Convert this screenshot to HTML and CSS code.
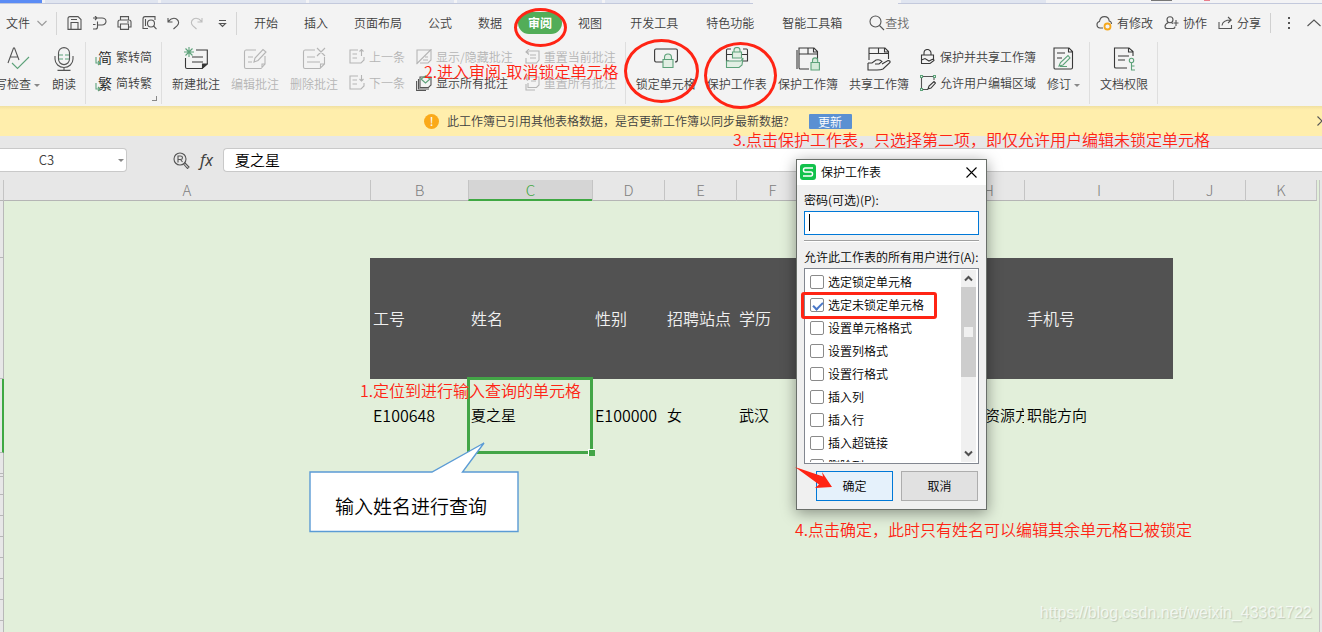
FILE: index.html
```html
<!DOCTYPE html>
<html lang="zh-CN">
<head>
<meta charset="utf-8">
<title>保护工作表</title>
<link rel="stylesheet" href="styles.css">
</head>
<body>
<div class="page">
  <div class="tabstrip">
    <span class="tab home"></span><span class="tab short"></span><span class="tab"></span><span class="tab"></span><span class="tab"></span><span class="tab"></span><span class="tab active"></span><span class="tab"></span>
    <span class="winicons"><i class="w1"></i><i class="w2"></i></span>
  </div>

  <header class="menubar">
    <button class="file">文件<svg class="ico soft" width="10" height="14" viewBox="0 0 10 14"><path d="M.5 5 5 9.500 9.500 5"/></svg></button>
    <div class="quick">
      <button aria-label="保存"><svg class="ico" width="15" height="14" viewBox="0 0 15 14"><path d="M1 2.500Q1 .6 3 .6H11L14 3.500V13.400H1ZM4 13V6.500H11V13M4 3.500H10"/></svg></button>
      <button aria-label="导出"><svg class="ico" width="15" height="14" viewBox="0 0 15 14"><path d="M1 2H10A4 3.500 0 0 1 10 9H5.500M5.500 5.500V11Q5.500 13 3.500 13H1M3 0 5 2 3 4M1 8.500H3.500"/></svg></button>
      <button aria-label="打印"><svg class="ico" width="15" height="14" viewBox="0 0 15 14"><path d="M3.500 4V.6H11.500V4M3.500 11H1V6Q1 4 3 4H12Q14 4 14 6V11H11.500M3.500 8H11.500V13.400H3.500ZM10 6H12"/></svg></button>
      <button aria-label="打印预览"><svg class="ico" width="15" height="14" viewBox="0 0 15 14"><path d="M6 12.500H1V3Q1 .6 3 .6H13V4M3.500 3V10"/><circle cx="9" cy="7.500" r="3.500"/><path d="M11.500 10 14.500 13.200"/></svg></button>
      <button aria-label="撤销"><svg class="ico" width="13" height="14" viewBox="0 0 13 14"><path d="M1 2V6H5.500M1.200 5.500C4 2.500 7 1.600 9.500 3 12.500 5 12 8 10 9.800L6.500 13"/></svg></button>
      <button aria-label="恢复"><svg class="ico faint" width="13" height="14" viewBox="0 0 13 14"><path d="M12 2V6H7.500M11.800 5.500C9 2.500 6 1.600 3.500 3 .5 5 1 8 3 9.800L6.500 13"/></svg></button>
      <button aria-label="更多"><svg class="ico" width="9" height="14" viewBox="0 0 9 14"><path d="M1 4.500H8M1.500 7.500H7.500L4.500 10.500Z"/></svg></button>
    </div>
    <nav class="tabs">
      <button>开始</button><button>插入</button><button>页面布局</button><button>公式</button><button>数据</button><button class="current">审阅</button><button>视图</button>
    </nav>
    <nav class="tabs extra">
      <button>开发工具</button><button>特色功能</button><button>智能工具箱</button>
    </nav>
    <button class="find"><svg class="ico" width="16" height="16" viewBox="0 0 16 16"><circle cx="6.500" cy="6.500" r="5.500"/><path d="M10.500 10.500 15 15"/></svg>查找</button>
    <div class="account">
      <button><svg class="ico" width="17" height="16" viewBox="0 0 17 16"><path d="M7 13H4A3.300 3.300 0 0 1 3.500 6.500C4 3 6 1.600 8.500 1.600S13 3.500 13.200 6Q15.500 6.500 15.500 9"/><circle cx="11.500" cy="11.500" r="3" stroke="#f6a81c" stroke-width="1.800"/></svg>有修改</button>
      <button><svg class="ico" width="15" height="16" viewBox="0 0 15 16"><circle cx="6" cy="4.800" r="3"/><path d="M4.500 7.500C2 8.500 1 10 1 11.500 1 13 2 13.500 3 13.500H9Q11 13.500 11 11.500M7.500 7.800 9 8.500M12 5V11M9.500 8H14.500"/></svg>协作</button>
      <button><svg class="ico" width="15" height="16" viewBox="0 0 15 16"><path d="M1 7V13.500H13.500V10M4 10.500C4.500 6.500 7 5 13 5M10 2 13.200 5 10 8"/></svg>分享</button>
    </div>
    <button class="dots" aria-label="更多选项"><svg width="4" height="14" viewBox="0 0 4 14" fill="#555"><rect x="1" y="1" width="2" height="2"/><rect x="1" y="6" width="2" height="2"/><rect x="1" y="11" width="2" height="2"/></svg></button>
    <button class="collapse" aria-label="折叠功能区"><svg class="ico" width="14" height="14" viewBox="0 0 14 14"><path d="M.5 10 7 4 13.500 10"/></svg></button>
  </header>

  <div class="ribbon">
    <div class="group first">
      <button class="big"><svg class="ico" width="24" height="24" viewBox="0 0 24 24"><path d="M2 16 7.500 1H8.500L13 13M4 10H12"/><path class="g" d="M6 16 11.500 21.500 23 10"/></svg><span>写检查<b class="arrow"></b></span></button>
      <button class="big"><svg class="ico" width="24" height="24" viewBox="0 0 24 24"><rect x="6.500" y=".6" width="11" height="17" rx="5.500"/><path d="M3 9V12A9 8.500 0 0 0 21 12V9M12 20.500V23M5.500 23.400H18.500"/><path class="g" d="M7 8H11M13 8H17M7 12H11M13 12H17"/></svg><span>朗读</span></button>
    </div>
    <div class="group convert">
      <div class="stack">
        <button class="small"><span class="glyph">简<svg class="ico g" width="6" height="9" viewBox="0 0 6 9"><path d="M1 0V6H5M3 4 5 6 3 8"/></svg></span>繁转简</button>
        <button class="small"><span class="glyph">繁<svg class="ico g" width="6" height="9" viewBox="0 0 6 9"><path d="M1 0V6H5M3 4 5 6 3 8"/></svg></span>简转繁</button>
      </div>
      <i class="corner"></i>
    </div>
    <div class="group">
      <button class="big"><svg class="ico dark" width="24" height="24" viewBox="0 0 24 24"><path d="M12 3H23.300V17L18 21.500H3Q1.500 21.500 1.500 20V11M8 10H19M8 15H19"/><path d="M18.500 21V17H23Z" fill="#333"/><path class="g" d="M5 0V10M0 5H10M1.500 1.500 8.500 8.500M8.500 1.500 1.500 8.500"/></svg><span>新建批注</span></button>
      <button class="big off"><svg class="ico" width="24" height="24" viewBox="0 0 24 24"><path d="M13 3H3Q1.500 3 1.500 5V20Q1.500 21.500 3 21.500H18L22 17V9M5 10H10M5 15H9M19 21V17H22"/><path d="M11 15 12 11 20 2.500 23 5 15 13.500Z"/></svg><span>编辑批注</span></button>
      <button class="big off"><svg class="ico" width="24" height="24" viewBox="0 0 24 24"><path d="M13 3H3Q1.500 3 1.500 5V20Q1.500 21.500 3 21.500H18L22.500 17V10M5 10H13M5 15H18M18.500 21V17H22M15 1 23 9M23 1 15 9"/></svg><span>删除批注</span></button>
      <div class="stack">
        <button class="small off"><svg class="ico" width="16" height="16" viewBox="0 0 16 16"><path d="M9 1H1V14H12L15 11V8M3.500 5H8M3.500 9H8M12.500 7V0M10.500 2.500 12.500 .5 14.500 2.500"/></svg>上一条</button>
        <button class="small off"><svg class="ico" width="16" height="16" viewBox="0 0 16 16"><path d="M9 1H1V14H12L15 11V8M3.500 5H8M3.500 9H8M12.500 0V6M10.500 4 12.500 6 14.500 4"/></svg>下一条</button>
      </div>
      <div class="stack">
        <button class="small off"><svg class="ico" width="16" height="16" viewBox="0 0 16 16"><path d="M1 14V1H15V11L12 14H4M.5 15 15.500 0M9 8H12M7 11H12"/></svg>显示/隐藏批注</button>
        <button class="small"><svg class="ico" width="16" height="16" viewBox="0 0 16 16"><path d="M4 2H15V10L12.500 12.500H4ZM2.500 4V14H13M.6 6V15.500H10"/><path class="g" d="M5 4 9.500 8 14 4 9.500 1Z"/></svg>显示所有批注</button>
      </div>
      <div class="stack">
        <button class="small off"><svg class="ico" width="16" height="16" viewBox="0 0 16 16"><path d="M5 2H15V11L12.500 14H2V9M5 0 2 3 5 5.500M2 3H5M6 6H12M6 9H12"/></svg>重置当前批注</button>
        <button class="small off"><svg class="ico" width="16" height="16" viewBox="0 0 16 16"><path d="M6 2H15V10L12.500 12.500H4V8M2 9V15H11M4 0 1 3 4 5.500M1 3H6M7 6H12"/></svg>重置所有批注</button>
      </div>
    </div>
    <div class="group">
      <button class="big"><svg class="ico dark" width="24" height="24" viewBox="0 0 24 24"><path d="M9 15H2Q.6 15 .6 13V3.500Q.6 2 2 2H22Q23.400 2 23.400 3.500V13Q23.400 15 21 15"/><path class="g" fill="#e2efe4" d="M9 12.500H19V20.500H9ZM10.500 12.500V10.500A3.500 3.500 0 0 1 17.500 10.500V12.500"/></svg><span>锁定单元格</span></button>
      <button class="big"><svg class="ico dark" width="24" height="24" viewBox="0 0 24 24"><path d="M6 2H2.500Q1.500 2 1.500 3.500V14H4M1.500 7.500H23M18 2H21.500Q22.500 2 22.500 3.500V14H18"/><path class="g" fill="#e2efe4" d="M7.500 5H16.500V11H7.500ZM9 5V3A3 2.500 0 0 1 15 3V5M1.500 14H16L18 11 17 18 14 20.500H1.500Z"/></svg><span>保护工作表</span></button>
      <button class="big"><svg class="ico dark" width="24" height="24" viewBox="0 0 24 24"><path d="M13 22H4Q3 22 3 20.500V1H18L21.500 4.500V12M3 7H21.500M12 1V7M1 3V22M17.500 1V5H21"/><path class="g" fill="#d4ead8" d="M15 15.500H23.400V23H15ZM16.500 15.500V13.500A2.500 2.500 0 0 1 21.700 13.500V15.500"/></svg><span>保护工作簿</span></button>
      <button class="big"><svg class="ico dark" width="24" height="24" viewBox="0 0 24 24"><path d="M2 13V1H18L21.500 4.500V12M2 6.500H21.500M11.500 1V6.500M17.500 1V5H21M1 16H5L9 13Q13 12 15 14.500L12 17H8M15 17 21 13.500Q23.500 13.500 23 15.500L16 22Q14 23 10 23H1V16"/></svg><span>共享工作簿</span></button>
      <div class="stack">
        <button class="small"><svg class="ico dark" width="16" height="16" viewBox="0 0 16 16"><path d="M4 5.500V4A3.500 3.500 0 0 1 11 4V5.500M1.500 14V6H13.500V10M1 14.500H10L14 11.500Q14 10 12 10.500L9 12 5 9.500 1.500 11"/></svg>保护并共享工作簿</button>
        <button class="small"><svg class="ico" width="16" height="16" viewBox="0 0 16 16"><path d="M3 1.500H13M1.500 3V13M14 3V5M3 14.500H8"/><path class="dark" d="M8 14 9 11 14 6.500 15.500 8 11 13Z"/><path class="g" d="M.5 .5H2.500V2.500H.5ZM13.500 .5H15.500V2.500H13.500ZM.5 13.500H2.500V15.500H.5Z"/></svg>允许用户编辑区域</button>
      </div>
      <button class="big"><svg class="ico dark" width="24" height="24" viewBox="0 0 24 24"><path d="M3 1H18L21.500 4.500V20.500Q21.500 22 20 22H4Q3 22 3 20.500ZM17.500 1V5H21M6 6H14M6 11H11"/><path class="g" d="M8 19 9.500 15.500 17 8.500 19 11 12 18ZM9 19.500H16"/></svg><span>修订<b class="arrow"></b></span></button>
    </div>
    <div class="group">
      <button class="big"><svg class="ico dark" width="24" height="24" viewBox="0 0 24 24"><path d="M15 21H4Q2.500 21 2.500 20V1H17L21 4.500V9M16.500 1V5H21M6 9H17M6 13H13"/><path class="g" d="M19.500 15.500V23H23M19.500 19H22.500"/><circle class="g" cx="19.500" cy="13.500" r="2.200"/></svg><span>文档权限</span></button>
    </div>
  </div>

  <div class="notice">
    <i class="warn">!</i>
    <span>此工作簿已引用其他表格数据，是否更新工作簿以同步最新数据?</span>
    <button class="update">更新</button>
    <button class="dismiss" aria-label="关闭"><svg class="ico" width="10" height="10" viewBox="0 0 10 10"><path d="M.5 .5 9.500 9.500M9.500 .5 .5 9.500"/></svg></button>
  </div>

  <div class="formula">
    <label class="namebox"><input value="C3" aria-label="名称框"><b class="arrow"></b></label>
    <button class="lookup" aria-label="浏览"><svg class="ico" width="17" height="17" viewBox="0 0 17 17"><circle cx="7" cy="7" r="6"/><path d="M5 10.500V4H7.500Q9.500 4 9.500 5.700T7.500 7.500H5M7.500 7.500 9.500 10M11.500 10.500 16 15 14.500 16.500 10.500 12"/></svg></button>
    <button class="fx">fx</button>
    <input class="content" value="夏之星" aria-label="编辑栏">
  </div>

  <main class="sheet">
    <table>
      <colgroup><col class="c-row"><col class="c-a"><col class="c-b"><col class="c-c"><col class="c-n"><col class="c-n"><col class="c-n"><col class="c-g"><col class="c-n"><col class="c-i"><col class="c-n"><col class="c-n"></colgroup>
      <thead><tr><th></th><th>A</th><th>B</th><th class="on">C</th><th>D</th><th>E</th><th>F</th><th>G</th><th>H</th><th>I</th><th>J</th><th>K</th></tr></thead>
      <tbody>
        <tr class="r1"><th></th><td colspan="11"></td></tr>
        <tr class="r2"><th></th><td></td><td class="hd">工号</td><td class="hd">姓名</td><td class="hd">性别</td><td class="hd">招聘站点</td><td class="hd">学历</td><td class="hd"></td><td class="hd"></td><td class="hd">手机号</td><td></td><td></td></tr>
        <tr class="r3"><th class="on"></th><td></td><td class="id">E100648</td><td class="picked">夏之星</td><td class="id">E100000</td><td>女</td><td>武汉</td><td></td><td>人力资源方向</td><td>职能方向</td><td></td><td></td></tr>
        <tr><th></th><td colspan="11"></td></tr>
        <tr class="thin"><th></th><td colspan="11"></td></tr>
        <tr class="short-row"><th></th><td colspan="11"></td></tr>
        <tr><th></th><td colspan="11"></td></tr>
        <tr><th></th><td colspan="11"></td></tr>
        <tr><th></th><td colspan="11"></td></tr>
        <tr><th></th><td colspan="11"></td></tr>
        <tr><th></th><td colspan="11"></td></tr>
        <tr><th></th><td colspan="11"></td></tr>
        <tr><th></th><td colspan="11"></td></tr>
      </tbody>
    </table>
    <div class="vscroll"></div>
  </main>

  <div class="callout">
    <svg width="210" height="91" viewBox="0 0 210 91"><path d="M1 30H123L175 1 153.500 30H209V89.500H1Z" fill="#fff" stroke="#5b9bd5" stroke-width="1.400"/></svg>
    <p>输入姓名进行查询</p>
  </div>

  <section class="dialog" role="dialog" aria-labelledby="dlg-title">
    <div class="titlebar">
      <svg width="16" height="16" viewBox="0 0 16 16"><rect width="16" height="16" rx="3" fill="#12c24c"/><path d="M13 4H5Q3.500 4 3.500 6T5 8H11Q12.500 8 12.500 10T11 12H3" fill="none" stroke="#fff" stroke-width="1.500"/></svg>
      <h1 id="dlg-title">保护工作表</h1>
      <button aria-label="关闭"><svg width="11" height="11" viewBox="0 0 11 11"><path d="M.5 .5 10.500 10.500M10.500 .5 .5 10.500" stroke="#000" stroke-width="1.100"/></svg></button>
    </div>
    <div class="dlg-body">
      <label for="pw">密码(可选)(P):</label>
      <input id="pw" type="password">
      <hr>
      <p id="perm">允许此工作表的所有用户进行(A):</p>
      <div class="list" role="group" aria-labelledby="perm">
        <div class="options">
          <label><input type="checkbox">选定锁定单元格</label>
          <label><input type="checkbox" checked>选定未锁定单元格</label>
          <label><input type="checkbox">设置单元格格式</label>
          <label><input type="checkbox">设置列格式</label>
          <label><input type="checkbox">设置行格式</label>
          <label><input type="checkbox">插入列</label>
          <label><input type="checkbox">插入行</label>
          <label><input type="checkbox">插入超链接</label>
          <label><input type="checkbox">删除列</label>
        </div>
        <div class="bar">
          <svg width="15" height="17" viewBox="0 0 15 17"><path d="M4 10.500 7.500 7 11 10.500" fill="none" stroke="#505050" stroke-width="2"/></svg>
          <i class="thumb"></i>
          <svg width="15" height="17" viewBox="0 0 15 17"><path d="M4 6.500 7.500 10 11 6.500" fill="none" stroke="#505050" stroke-width="2"/></svg>
        </div>
      </div>
      <div class="actions"><button class="ok">确定</button><button>取消</button></div>
    </div>
  </section>

  <i class="ring ring-tab"></i>
  <i class="ring ring-cell"></i>
  <i class="ring ring-sheet"></i>
  <i class="box"></i>
  <svg class="pointer" width="38" height="24" viewBox="0 0 38 24"><path d="M0 0 28 9.500 27 5 37 20 20 21 24 17.500Z" fill="#ff2414"/></svg>
  <p class="note n1">1.定位到进行输入查询的单元格</p>
  <p class="note n2">2.进入审阅-取消锁定单元格</p>
  <p class="note n3">3.点击保护工作表，只选择第二项，即仅允许用户编辑未锁定单元格</p>
  <p class="note n4">4.点击确定，此时只有姓名可以编辑其余单元格已被锁定</p>
  <p class="watermark">https://blog.csdn.net/weixin_43361722</p>
</div>
</body>
</html>
```

FILE: styles.css
```css
* { box-sizing: border-box; }
body {
  margin: 0;
  font: 350 12px/18px "Noto Sans CJK SC", "Noto Sans", sans-serif;
  color: #404040;
  background: #e2efda;
}
button, input { font: inherit; color: inherit; }
button { border: 0; padding: 0; background: none; white-space: nowrap; }
p, h1 { margin: 0; font-size: inherit; font-weight: inherit; }
svg { flex: none; display: block; }

.page {
  position: relative;
  display: flex;
  flex-direction: column;
  height: 100vh;
  overflow: hidden;
}
.ico { fill: none; stroke: #555; stroke-width: 1.1; }
.dark { stroke: #383838; }
.soft { stroke: #999; }
.faint { stroke: #bdbdbd; }
.g { stroke: #5da27a; }

/* document tabs */
.tabstrip {
  flex: none;
  display: flex;
  gap: 3px;
  height: 4px;
  background: #f3f3f5;
  border-bottom: 1px solid #c3c9dc;
}
.tab { width: 145px; background: #e0e5f0; }
.tab.home { width: 42px; background: #5b8cf5; }
.tab.short { width: 113px; }
.tab.active { height: 4px; background: #f3f3f3; }
.winicons { display: flex; gap: 32px; margin-left: 102px; }
.winicons i { height: 1px; }
.w1 { width: 21px; background: #777; }
.w2 { width: 6px; background: #e87f8c; }

/* menu bar */
.menubar {
  flex: none;
  display: flex;
  align-items: center;
  height: 38px;
  background: #f3f3f3;
}
.file {
  display: flex;
  align-items: center;
  gap: 7px;
  height: 23px;
  padding: 0 9px 0 6px;
  border-right: 1px solid #d5d5d5;
}
.quick {
  display: flex;
  align-items: center;
  gap: 10px;
  height: 23px;
  padding: 0 9px 0 10px;
  border-right: 1px solid #d5d5d5;
}
.quick button:last-child { margin-left: 5px; }
.tabs { display: flex; gap: 26px; margin-left: 17px; }
.tabs.extra { gap: 28px; margin-left: 28px; }
.tabs button { height: 22px; }
.tabs .current {
  margin: 0 -10px;
  padding: 0 10px;
  border-radius: 11px;
  background: #52ad58;
  color: #fff;
  font-weight: bold;
}
.find { display: flex; align-items: center; margin-left: 27px; color: #666; }
.account { display: flex; gap: 11px; margin-left: auto; }
.account button { display: flex; align-items: center; gap: 4px; }
.dots { height: 20px; margin-left: 9px; padding: 0 16px; border-left: 1px solid #d0d0d0; }
.collapse { margin-right: 1px; }

/* ribbon */
.ribbon { flex: none; display: flex; height: 64px; background: #f3f3f3; }
.group {
  position: relative;
  display: flex;
  align-items: flex-start;
  gap: 11px;
  height: 62px;
  padding: 5px 9px 0 10px;
  border-right: 1px solid #dedede;
}
.group.first { gap: 12px; margin-left: -5px; padding-left: 0; }
.big { display: flex; flex-direction: column; align-items: center; gap: 4px; }
.stack { display: flex; flex-direction: column; gap: 6px; }
.small { display: flex; align-items: center; gap: 4px; height: 20px; }
.off { color: #b5b5b5; }
.off .ico { stroke: #b5b5b5; }
.arrow {
  display: inline-block;
  margin-left: 3px;
  border: 3px solid transparent;
  border-top-color: #888;
  border-bottom-width: 0;
  vertical-align: middle;
}
.glyph { position: relative; width: 16px; font-size: 14px; color: #222; text-align: right; }
.glyph svg { position: absolute; left: -1px; bottom: 0; }
.corner {
  position: absolute;
  right: 4px;
  bottom: 3px;
  width: 5px;
  height: 5px;
  border: solid #888;
  border-width: 0 1px 1px 0;
}

/* update notice */
.notice {
  flex: none;
  display: flex;
  align-items: center;
  gap: 8px;
  height: 30px;
  padding-left: 424px;
  background: linear-gradient(#f0e0a0, #ffeeac 4px);
}
.warn {
  width: 15px;
  height: 15px;
  border-radius: 50%;
  background: #faa91a;
  color: #fff;
  font: 12px/15px "Noto Sans", sans-serif;
  text-align: center;
}
.update {
  width: 43px;
  height: 15px;
  margin-left: 12px;
  border-radius: 1px;
  background: #5b90d2;
  color: #fff;
  line-height: 15px;
}
.dismiss { margin: 0 -5px 0 auto; }

/* formula bar */
.formula {
  flex: none;
  display: flex;
  align-items: center;
  height: 44px;
  padding-top: 4px;
  background: #e7e7e7;
}
.namebox {
  display: flex;
  align-items: center;
  width: 127px;
  height: 24px;
  padding-right: 2px;
  border: 1px solid #c9c9c9;
  border-left: 0;
  border-radius: 0 4px 4px 0;
  background: #fff;
}
.namebox input {
  flex: 1;
  min-width: 0;
  border: 0;
  padding: 0 22px 0 0;
  background: none;
  font-size: 13px;
  text-align: center;
}
.lookup { margin-left: 46px; }
.fx { width: 33px; font: italic 16px/20px "Noto Sans", sans-serif; }
.content {
  flex: 1;
  min-width: 0;
  height: 24px;
  padding: 0 11px 2px;
  border: 1px solid #c9c9c9;
  border-right: 0;
  border-radius: 4px 0 0 4px;
  background: #fff;
  color: #000;
  font-size: 15px;
}

/* worksheet */
.sheet {
  flex: 1;
  display: flex;
  justify-content: space-between;
  min-height: 0;
  overflow: hidden;
}
table { flex: none; width: 1317px; height: 0; table-layout: fixed; border-collapse: separate; border-spacing: 0; }
.c-row { width: 4px; }
.c-a { width: 366px; }
.c-b { width: 98px; }
.c-c { width: 124px; }
.c-n { width: 72px; }
.c-g { width: 144px; }
.c-i { width: 149px; }
th, td { padding: 0; }
thead th {
  height: 21px;
  border-left: 1px solid #c4c4c4;
  border-bottom: 1px solid #b5b5b5;
  background: #e7e7e7;
  color: #808080;
  font-size: 15px;
  font-weight: 300;
  line-height: 20px;
}
thead th:first-child { border-left: 0; border-right: 1px solid #c4c4c4; }
thead th:nth-child(2) { border-left: 0; }
thead th:last-child { border-right: 1px solid #c4c4c4; }
thead .on { background: #d5d5d5; border-bottom: 2px solid #3fa843; color: #3fa843; line-height: 19px; }
tbody tr { height: 21px; }
tbody th { border-right: 1px solid #b8b8b8; border-bottom: 1px solid #b8b8b8; background: #e7e7e7; }
tbody .on { border-right: 2px solid #3fa843; }
tbody td {
  padding: 0 0 2px 3px;
  overflow: hidden;
  color: #000;
  font-size: 15px;
  line-height: 18px;
  white-space: nowrap;
}
.r1 { height: 57px; }
.r2 { height: 121px; }
.r3 { height: 74px; }
.thin { height: 3px; }
.thin td { padding: 0; line-height: 0; }
.short-row { height: 18px; }
.short-row td { padding: 0; line-height: 0; }
tbody .hd { background: #525252; color: #f0f0f0; font-size: 16px; }
tbody .id { font-size: 16px; }
tbody .picked { position: relative; overflow: visible; }
.picked::before {
  content: "";
  position: absolute;
  inset: -2px -1px -1px;
  border: 3px solid #43a547;
}
.picked::after {
  content: "";
  position: absolute;
  right: -3px;
  bottom: -3px;
  width: 6px;
  height: 6px;
  border: solid #fff;
  border-width: 1px 0 0 1px;
  background: #43a547;
}
.vscroll { width: 3px; border-left: 1px solid #c4c4c4; background: #e7e7e7; }

.callout { position: absolute; left: 309px; top: 442px; }
.callout p {
  position: absolute;
  left: 0;
  right: 0;
  top: 51px;
  padding-left: 26px;
  color: #000;
  font-size: 19px;
  line-height: 26px;
}

/* protect-sheet dialog */
.dialog {
  position: absolute;
  left: 796px;
  top: 159px;
  width: 191px;
  border: 1px solid #6a6f6a;
  background: #f0f0f0;
  color: #000;
  box-shadow: 0 3px 14px rgba(0, 0, 0, .4);
}
.titlebar {
  display: flex;
  align-items: center;
  gap: 5px;
  height: 25px;
  padding: 0 9px 1px 3px;
  background: #fff;
}
.titlebar button { margin-left: auto; }
.dlg-body { display: flex; flex-direction: column; padding: 6px 7px 8px; white-space: nowrap; }
#pw {
  height: 24px;
  margin-top: 2px;
  padding: 0 4px;
  border: 1px solid #0078d7;
  background: #fff linear-gradient(#000, #000) 4px 2px / 1px 17px no-repeat;
}
hr { width: 100%; height: 2px; margin: 5px 0 6px; border: 0; border-top: 1px solid #a0a0a0; background: #fff; }
.list {
  display: flex;
  justify-content: space-between;
  height: 196px;
  margin-top: 2px;
  padding: 1px 2px 1px 5px;
  border: 1px solid #828790;
  background: #fff;
}
.options { overflow: hidden; }
.options label { display: flex; align-items: center; gap: 4px; height: 23px; }
.options input {
  appearance: none;
  width: 14px;
  height: 14px;
  margin: 0;
  border: 1px solid #8a8a8a;
  border-radius: 2px;
  background: #fff;
}
.options input:checked::after {
  content: "";
  display: block;
  width: 8px;
  height: 4px;
  margin: 3px 0 0 2px;
  border: solid #4a78c8;
  border-width: 0 0 2px 2px;
  rotate: -45deg;
}
.bar { display: flex; flex-direction: column; justify-content: space-between; width: 15px; background: #f0f0f0; }
.thumb { display: flex; align-items: center; justify-content: center; height: 90px; margin-bottom: auto; background: #cdcdcd; }
.thumb::after { content: ""; width: 9px; height: 10px; background: #f0f0f0; }
.actions { display: flex; justify-content: flex-end; gap: 8px; margin-top: 7px; padding-right: 1px; }
.actions button { width: 77px; height: 30px; border: 1px solid #adadad; background: #e1e1e1; }
.actions .ok { border-color: #0078d7; background: #e5f1fb; }

/* red markup */
.ring { position: absolute; border: 3px solid #ff2414; border-radius: 50%; }
.ring-tab { left: 514px; top: 8px; width: 53px; height: 39px; }
.ring-cell { left: 624px; top: 39px; width: 75px; height: 64px; }
.ring-sheet { left: 704px; top: 42px; width: 73px; height: 67px; }
.box { position: absolute; left: 801px; top: 292px; width: 136px; height: 27px; border: 3px solid #ff2414; border-radius: 3px; }
.pointer { position: absolute; left: 795px; top: 467px; }
.note { position: absolute; color: #ff2414; font-size: 16px; line-height: 20px; white-space: nowrap; }
.n1 { left: 360px; top: 380px; }
.n2 { left: 424px; top: 61px; }
.n3 { left: 733px; top: 129px; }
.n4 { left: 795px; top: 519px; }
.watermark {
  position: absolute;
  right: 10px;
  bottom: 9px;
  color: rgba(255, 255, 255, .7);
  font: 16px/20px "Liberation Sans", sans-serif;
  text-shadow: 1px 1px 1px rgba(0, 0, 0, .15);
}
```
